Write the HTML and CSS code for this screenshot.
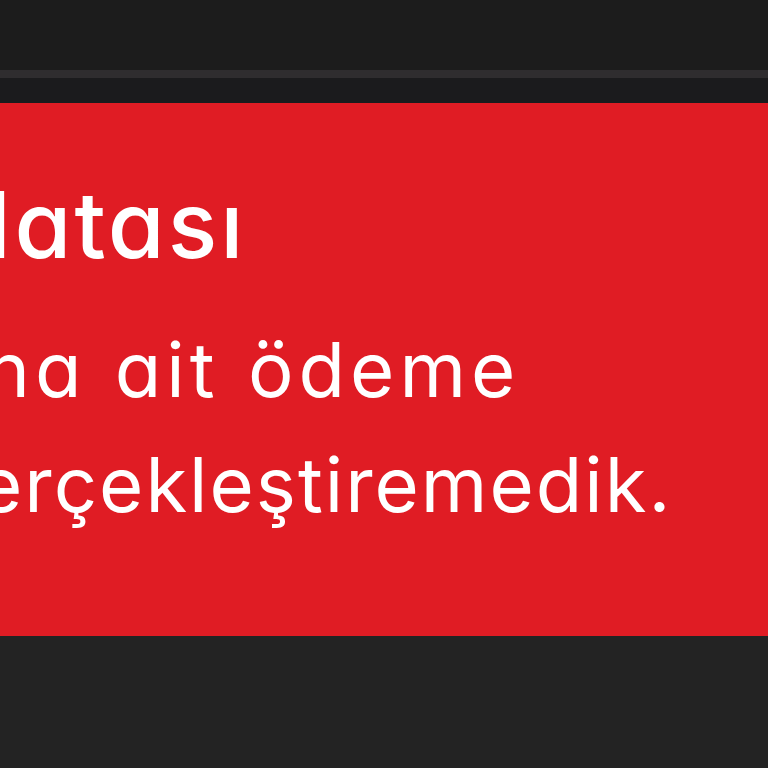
FILE: index.html
```html
<!DOCTYPE html>
<html lang="tr">
<head>
<meta charset="utf-8">
<link rel="stylesheet" href="styles.css">
</head>
<body>
<header class="topbar"></header>
<div class="gap"></div>
<section class="banner">
  <h1 class="title">Hatası</h1>
  <p class="message">
    <span class="line line-1">na ait ödeme</span>
    <span class="line line-2">erçekleştiremedik.</span>
  </p>
</section>
<main class="rest"></main>
</body>
</html>
```
FILE: styles.css
```css
html, body {
  margin: 0;
  padding: 0;
  background: #232323;
  overflow: hidden;
}
body {
  width: 768px;
  height: 768px;
  font-family: Inter, "Noto Sans", sans-serif;
  font-feature-settings: "cv11" 1;
}
.topbar {
  height: 70px;
  background: #1c1c1c;
  border-bottom: 8px solid #2f2d2f;
}
.gap {
  height: 25px;
  background: #1b1b1d;
}
.banner {
  background: #e01c24;
  height: 533px;
  box-sizing: border-box;
  padding-top: 68px;
  overflow: hidden;
  color: #ffffff;
}
.title {
  margin: 0;
  font-size: 92px;
  font-weight: 500;
  line-height: 108px;
  letter-spacing: 3px;
  text-indent: -57px;
  white-space: nowrap;
}
.message {
  margin: 33px 0 0 0;
  font-size: 76px;
  font-weight: 400;
  line-height: 115px;
  letter-spacing: 2px;
  white-space: nowrap;
}
.line {
  display: block;
}
.line-1 {
  text-indent: -15px;
  letter-spacing: 5px;
  word-spacing: 2px;
}
.line-2 {
  text-indent: -22px;
}
.rest {
  height: 132px;
  background: #232323;
}
```
